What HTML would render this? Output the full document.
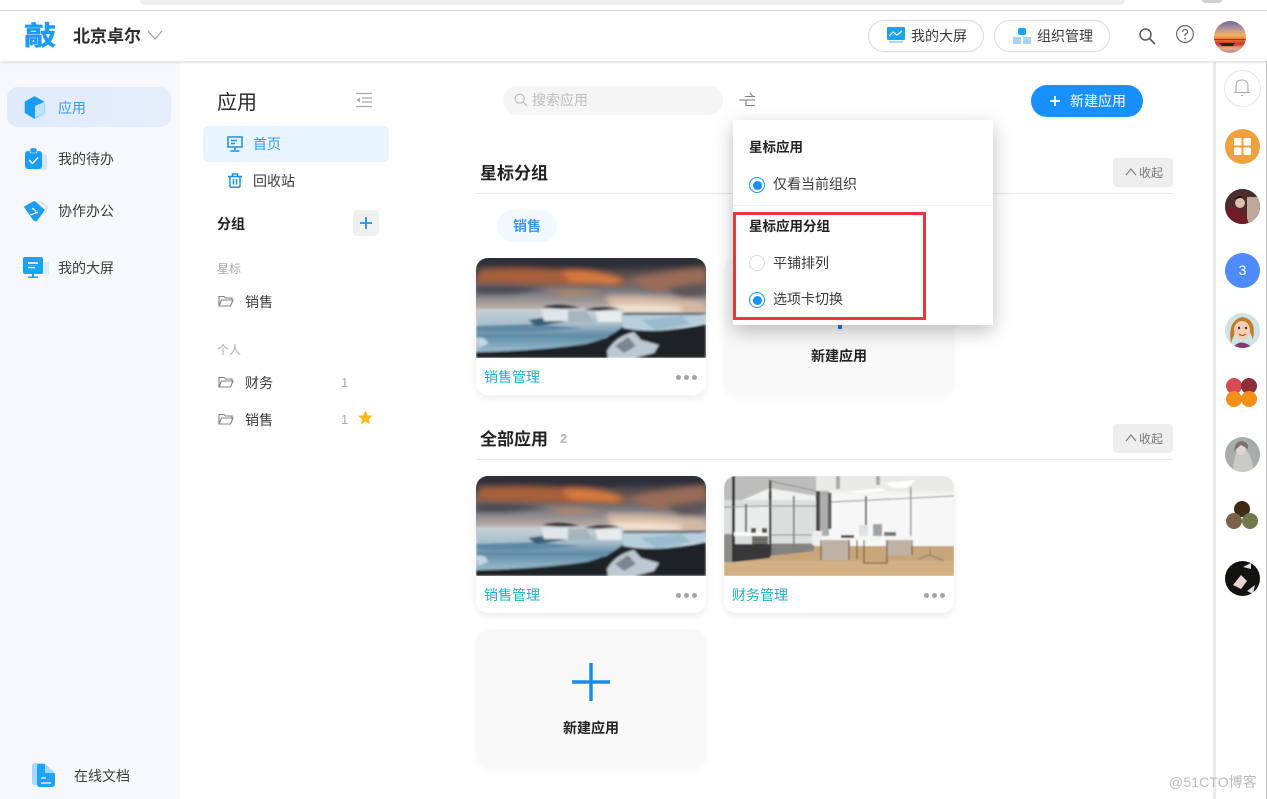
<!DOCTYPE html>
<html lang="zh"><head><meta charset="utf-8"><title>应用</title>
<style>
html,body{margin:0;padding:0;width:1267px;height:799px;overflow:hidden;background:#fff}
body{position:relative;font-family:"Liberation Sans","Noto Sans CJK SC",sans-serif;color:#333;font-size:14px}
.a{position:absolute}
.t{position:absolute;white-space:nowrap;line-height:20px;font-size:14px;color:#3a3a3a}
.b{font-weight:700;color:#222}
.card{position:absolute;width:230px;height:137px;border-radius:12px;background:#fff;box-shadow:0 3px 8px rgba(0,0,0,.08);overflow:hidden}
.card svg{display:block}
.nc{position:absolute;width:230px;background:#f8f8f8;border-radius:14px;box-shadow:0 3px 8px rgba(0,0,0,.04)}
.dots{position:absolute;width:22px;height:5px}
.dots i{position:absolute;top:0;width:5px;height:5px;border-radius:50%;background:#a4a4a4}
.dots i:nth-child(1){left:0}.dots i:nth-child(2){left:8px}.dots i:nth-child(3){left:16px}
.pill{position:absolute;top:20px;width:114px;height:30px;border:1px solid #d9d9d9;border-radius:16px;background:#fff}
.radio{position:absolute;left:749px;width:14px;height:14px;border:1px solid #1890ff;border-radius:50%;background:#fff}
.radio::after{content:"";position:absolute;left:2.5px;top:2.5px;width:9px;height:9px;border-radius:50%;background:#1890ff}
.radio.off{border-color:#d9d9d9}.radio.off::after{display:none}
.fold{position:absolute;left:1113px;width:60px;height:29px;background:#eee;border-radius:4px}
.av{position:absolute;left:1225px;width:35px;height:35px;border-radius:50%;overflow:hidden}
</style></head><body>
<svg width="0" height="0" style="position:absolute"><defs>
<linearGradient id="sky" x1="0" y1="0" x2="0" y2="1"><stop offset="0" stop-color="#2f313d"/><stop offset=".3" stop-color="#5f5150"/><stop offset=".55" stop-color="#7a7a80"/><stop offset=".8" stop-color="#b6aca6"/><stop offset="1" stop-color="#e3d8cc"/></linearGradient>
<linearGradient id="sea" x1="0" y1="0" x2="0" y2="1"><stop offset="0" stop-color="#c8d1d7"/><stop offset=".35" stop-color="#a9bfcd"/><stop offset=".62" stop-color="#5f8aa5"/><stop offset="1" stop-color="#9dbdcf"/></linearGradient>
<filter id="bl" x="-20%" y="-40%" width="140%" height="180%"><feGaussianBlur stdDeviation="3"/></filter>
<filter id="bs" x="-5%" y="-5%" width="110%" height="110%"><feGaussianBlur stdDeviation="1"/></filter>
<filter id="bm" x="-5%" y="-5%" width="110%" height="110%"><feGaussianBlur stdDeviation=".7"/></filter>
<symbol id="ice" viewBox="0 0 230 100">
<rect width="230" height="62" fill="url(#sky)"/>
<g filter="url(#bl)">
<path d="M0 0H230V9Q150 8 130 11T0 7Z" fill="#2b2d38"/>
<path d="M5 12Q50 9 90 13L148 20L150 27Q80 27 0 24Z" fill="#a8613a"/>
<path d="M85 13Q115 10 145 20L140 26L95 24Z" fill="#d9793c"/>
<path d="M150 22Q190 12 230 10V30L180 34Z" fill="#9a6c58"/>
<path d="M0 28Q40 26 70 31L30 36H0Z" fill="#45474f"/>
<path d="M190 30L230 24V38L205 40Z" fill="#5c5558"/>
<path d="M70 33Q100 30 130 36L90 38Z" fill="#b98a70"/>
<path d="M130 38Q170 36 230 44V54H135Z" fill="#d4b8a4"/>
<path d="M135 47Q170 45 205 49V55H140Z" fill="#f4e4d2"/>
</g>
<g filter="url(#bs)">
<path d="M147 55H230V56L215 58H147Z" fill="#4a4d55"/>
<path d="M0 94Q70 92 130 80L147 68L175 72Q205 72 230 66V100H0Z" fill="#1f2027"/>
<path d="M145 57H230V66L205 70Q185 74 160 72L147 70Z" fill="#b7cfdc"/>
<path d="M165 62L205 58L215 66L180 72Z" fill="#9abace"/>
<path d="M0 51H147L147 68Q135 80 110 86Q60 93 0 94Z" fill="url(#sea)"/>
<path d="M0 73Q50 76 105 70L60 66L0 68Z" fill="#5f8aa5"/>
<path d="M52 62L65 60L90 64L60 68Z" fill="#3d5d74"/>
<path d="M65 51H92L92 63H68Z" fill="#dfe5e8"/><path d="M92 53H110L118 64H92Z" fill="#a6b4bd"/>
<path d="M119 53H145L146 64H122Z" fill="#e7ebec"/>
<path d="M66 49Q84 44 104 50L85 51Z" fill="#34353b"/><path d="M108 52Q124 47 144 51L122 53Z" fill="#34353b"/>
<path d="M131 93Q140 78 158 74L165 82L183 87L178 95L158 100H132Z" fill="#bcc9d2"/>
<path d="M139 88L152 79L160 88L148 95Z" fill="#7b8690"/>
<path d="M0 80Q10 78 12 86L2 90Z" fill="#c5d7e1"/>
</g>
</symbol>
<symbol id="office" viewBox="0 0 230 100">
<rect width="230" height="100" fill="#f1f1f0"/>
<g filter="url(#bm)">
<rect width="230" height="15" fill="#e9e9e7"/>
<path d="M0 0H92V20L46 12L9 28H0Z" fill="#bdbdbd"/>
<rect y="24" width="92" height="50" fill="#dcdddd"/><rect x="10" y="30" width="36" height="28" fill="#eaebeb"/>
<rect x="105" y="18" width="125" height="52" fill="#f7f7f7"/>
<rect y="70" width="230" height="30" fill="#c9a67a"/>
<path d="M0 85H230V100H0Z" fill="#d2b083"/>
<path d="M0 58H10V86H0Z" fill="#8b8b88"/>
<path d="M10 68H46V82L10 86Z" fill="#38383a"/><path d="M46 68H90V75L46 80Z" fill="#828280"/>
<rect x="92" y="15" width="4" height="46" fill="#474747"/><rect x="96" y="15" width="9" height="47" fill="#aeaeae"/><rect x="104" y="17" width="3.5" height="36" fill="#5a5a5a"/>
<rect x="8" y="0" width="3" height="86" fill="#333"/><rect x="45" y="4" width="2.4" height="76" fill="#3e3e3e"/><rect x="21" y="28" width="2" height="30" fill="#666"/><rect x="69" y="20" width="1.6" height="52" fill="#777"/>
<rect x="141" y="20" width="1.8" height="40" fill="#555"/><rect x="186" y="11" width="1.4" height="52" fill="#888"/>
<path d="M46 5L92 15M0 31L46 30M46 30H92M10 57H46M47 59H92M47 68H92M107 26L230 20" stroke="#888" stroke-width=".9" fill="none"/>
<rect x="10" y="56" width="34" height="4" fill="#fbfbfb"/><rect x="27" y="52" width="5" height="5" fill="#555"/><rect x="38" y="52" width="5" height="5" fill="#555"/><rect x="28" y="60" width="16" height="8" fill="#6d6d6b"/>
<rect x="88" y="55" width="10" height="14" fill="#eee"/>
<rect x="97" y="60" width="93" height="4" fill="#f6f6f4"/>
<rect x="98" y="64" width="28" height="20" fill="#bdb2a4"/><rect x="162" y="64" width="25" height="15" fill="#bdb2a4"/>
<path d="M97 64V84M125 64V84M140 64V87H163V64M133 64V83M188 64V79" stroke="#6a5c48" stroke-width="1.2" fill="none"/>
<rect x="135" y="49" width="9" height="11" fill="#dfe1e2"/><rect x="149" y="48" width="9" height="12" fill="#9fa1a3"/><rect x="117" y="59" width="13" height="3" fill="#555"/><rect x="160" y="56" width="12" height="4" fill="#777"/>
<path d="M197 70H215L218 58H212L210 66H199Z" fill="#f7f7f7"/><path d="M206 72V80M194 83L206 79L220 85" stroke="#777" fill="none"/>
<rect x="112" y="0" width="4" height="13" fill="#aaa"/><rect x="152" y="0" width="4" height="9" fill="#aaa"/>
<path d="M126 15L158 12L162 15L132 17Z" fill="#fff"/><path d="M160 7L192 4L182 12L170 12Z" fill="#fff"/>
</g>
</symbol>
</defs></svg>

<!-- browser strip -->
<div class="a" style="left:140px;top:0;width:985px;height:5px;background:#efefef;border-radius:0 0 10px 10px"></div>
<div class="a" style="left:1202px;top:0;width:20px;height:3px;background:#cfcfcf;border-radius:0 0 10px 10px"></div>
<div class="a" style="left:0;top:10px;width:1267px;height:1px;background:#ddd"></div>

<!-- sidebars -->
<div class="a" style="left:0;top:62px;width:180px;height:737px;background:#f6f8fc"></div>
<div class="a" style="left:1213px;top:62px;width:3px;height:737px;background:#ececec"></div>
<div class="a" style="left:1266px;top:11px;width:1px;height:788px;background:#c4c4c4"></div>

<!-- header -->
<div class="a" style="left:0;top:11px;width:1267px;height:50px;background:#fff;box-shadow:0 1px 3px rgba(0,0,0,.16)"></div>
<div class="t" style="left:24px;top:20px;font-size:32px;line-height:32px;font-weight:700;color:#1a9cf0;transform:scaleY(.84);-webkit-text-stroke:.7px #1a9cf0">敲</div>
<div class="t b" style="left:73px;top:27px;font-size:17px;color:#2c2c2c">北京卓尔</div>
<svg class="a" style="left:147px;top:30px" width="16" height="11"><path d="M1 1L8 9L15 1" fill="none" stroke="#999" stroke-width="1.2"/></svg>
<div class="pill" style="left:868px"></div>
<svg class="a" style="left:887px;top:27px" width="18" height="17"><rect width="18" height="13" rx="1" fill="#1aa3f5"/><rect x="2" y="14" width="14" height="2" fill="#a9dcfb"/><path d="M2 9L6 5L10 8L15 4" stroke="#fff" fill="none" stroke-width="1.2"/></svg>
<div class="t" style="left:911px;top:26px;font-size:14px;line-height:20px">我的大屏</div>
<div class="pill" style="left:994px"></div>
<svg class="a" style="left:1013px;top:28px" width="18" height="16"><rect x="5" y="0" width="8" height="7" rx="2" fill="#1aa3f5"/><rect x="0" y="9" width="8" height="7" fill="#a8d4f5"/><rect x="10" y="9" width="8" height="7" fill="#a8d4f5"/></svg>
<div class="t" style="left:1037px;top:26px">组织管理</div>
<svg class="a" style="left:1138px;top:27px" width="18" height="18"><circle cx="7.5" cy="7.5" r="5.5" fill="none" stroke="#555" stroke-width="1.4"/><path d="M11.5 11.5L17 17" stroke="#555" stroke-width="1.6"/></svg>
<svg class="a" style="left:1175px;top:24px" width="20" height="20"><circle cx="10" cy="10" r="8.4" fill="none" stroke="#666" stroke-width="1.2"/><path d="M7.5 8Q7.5 5.5 10 5.5T12.5 8Q12.5 9.3 10 10.5V12" fill="none" stroke="#666" stroke-width="1.2"/><circle cx="10" cy="14.5" r=".9" fill="#666"/></svg>
<svg class="a" style="left:1214px;top:21px" width="32" height="32"><defs><clipPath id="c0"><circle cx="16" cy="16" r="16"/></clipPath><linearGradient id="sun" x1="0" y1="0" x2="0" y2="1"><stop offset="0" stop-color="#6a6a9e"/><stop offset=".3" stop-color="#c79a92"/><stop offset=".45" stop-color="#f5b35a"/><stop offset=".6" stop-color="#e8662d"/><stop offset=".72" stop-color="#c8382a"/><stop offset=".85" stop-color="#e7a98c"/><stop offset="1" stop-color="#b98a8a"/></linearGradient></defs><g clip-path="url(#c0)"><rect width="32" height="32" fill="url(#sun)"/><path d="M5 22H21L19 25H8Z" fill="#222"/><path d="M0 18H32V19H0Z" fill="#a53222"/></g></svg>

<!-- left nav -->
<div class="a" style="left:7px;top:87px;width:164px;height:40px;border-radius:11px;background:linear-gradient(90deg,#dfeafa,#e6eefb)"></div>
<svg class="a" style="left:23px;top:95px" width="24" height="25"><path d="M13 5L23 10V21L13 24Z" fill="#cfe6fb"/><path d="M11.5 2L20.5 7V17.5L11.5 23L2.5 17.5V7Z" fill="#189cf6" stroke="#189cf6" stroke-width="1.5" stroke-linejoin="round"/><path d="M12 11L21 7V18L12 23Z" fill="#bfe1fc"/></svg>
<div class="t" style="left:58px;top:98px;color:#3d97e8">应用</div>
<svg class="a" style="left:25px;top:148px" width="22" height="22"><rect x="8" y="6" width="14" height="16" rx="2" fill="#cfe6fb"/><rect x="0" y="3" width="17" height="18" rx="3" fill="#1c9cf2"/><rect x="5" y="0" width="7" height="5" rx="1.5" fill="#1c9cf2" stroke="#f6f8fc" stroke-width=".6"/><path d="M4 12L7.5 15.5L13 9.5" fill="none" stroke="#fff" stroke-width="1.4"/></svg>
<div class="t" style="left:58px;top:149px">我的待办</div>
<svg class="a" style="left:23px;top:200px" width="25" height="22"><path d="M9 3L18 2L24 7L22 13" fill="none" stroke="#cfe3f8" stroke-width="1.6"/><path d="M1 7Q1 6 2 6L11 1Q12 1 13 2L22 10L14 21Q12 22 10 20Z" fill="#1c9cf2"/><path d="M9 8L13 11M7.5 15L15 12" stroke="#fff" stroke-width="1.3"/></svg>
<div class="t" style="left:58px;top:201px">协作办公</div>
<svg class="a" style="left:23px;top:257px" width="26" height="21"><rect x="17" y="5" width="9" height="12" fill="#d7ebfb"/><rect width="20" height="17" rx="2" fill="#16a3f5"/><path d="M5 6H15M5 10.5H12" stroke="#fff" stroke-width="1.4"/><rect x="9" y="17" width="2" height="3" fill="#16a3f5"/><rect x="5" y="19.5" width="10" height="1.5" fill="#16a3f5"/></svg>
<div class="t" style="left:58px;top:258px">我的大屏</div>
<svg class="a" style="left:32px;top:763px" width="24" height="25"><path d="M3 0H11L10 22H3Q0 22 0 19V3Q0 0 3 0Z" fill="#a8d7fb"/><path d="M7 1H13L23 11V21Q23 24 20 24H8Q5 24 5 21V3Q5 1 7 1Z" fill="#1ea3f7"/><path d="M9 15H14M9 20H19" stroke="#d6eefe" stroke-width="1.4"/><path d="M13 1V10H23Z" fill="#9fd5fb"/></svg>
<div class="t" style="left:74px;top:766px">在线文档</div>

<!-- second nav -->
<div class="t" style="left:217px;top:90px;font-size:20px;line-height:26px;color:#2b2b2b">应用</div>
<svg class="a" style="left:355px;top:92px" width="18" height="16" stroke="#a8a8a8"><path d="M1 1.5H17M7 6H17M7 10H17M1 14.5H17" stroke-width="1.2"/><path d="M5 5.5V10.5L1.5 8Z" fill="#a8a8a8" stroke="none"/></svg>
<div class="a" style="left:203px;top:126px;width:186px;height:36px;border-radius:5px;background:#e8f4fe"></div>
<svg class="a" style="left:227px;top:136px" width="16" height="16" fill="none" stroke="#1c92e6" stroke-width="1.5"><rect x="1" y="1" width="14" height="10"/><path d="M4 4.5H10M4 7.5H8M8 11V14M3.5 15H12.5"/></svg>
<div class="t" style="left:253px;top:134px;color:#3d97e8">首页</div>
<svg class="a" style="left:228px;top:173px" width="14" height="15" fill="none" stroke="#1c92e6" stroke-width="1.5"><path d="M0 3.5H14M4.5 3V1H9.5V3M2 4V13Q2 14.3 3.5 14.3H10.5Q12 14.3 12 13V4M5.5 6V11.5M8.5 6V11.5"/></svg>
<div class="t" style="left:253px;top:171px">回收站</div>
<div class="t b" style="left:217px;top:214px">分组</div>
<div class="a" style="left:353px;top:210px;width:26px;height:26px;border-radius:4px;background:#eef0f2"></div>
<svg class="a" style="left:359px;top:216px" width="14" height="14"><path d="M7 1V13M1 7H13" stroke="#1c92e6" stroke-width="1.8"/></svg>
<div class="t" style="left:217px;top:259px;font-size:12px;color:#aaa">星标</div>
<svg class="a" style="left:218px;top:295px" width="16" height="12" fill="none" stroke="#808080" stroke-width="1.1"><path d="M1 11V1.5H6L7.5 3H14V5M1 11H12.5L15 5H3.5L1 11Z"/></svg>
<div class="t" style="left:245px;top:292px">销售</div>
<div class="t" style="left:217px;top:340px;font-size:12px;color:#aaa">个人</div>
<svg class="a" style="left:218px;top:376px" width="16" height="12" fill="none" stroke="#808080" stroke-width="1.1"><path d="M1 11V1.5H6L7.5 3H14V5M1 11H12.5L15 5H3.5L1 11Z"/></svg>
<div class="t" style="left:245px;top:373px">财务</div>
<div class="t" style="left:341px;top:373px;color:#aaa;font-size:13px">1</div>
<svg class="a" style="left:218px;top:413px" width="16" height="12" fill="none" stroke="#808080" stroke-width="1.1"><path d="M1 11V1.5H6L7.5 3H14V5M1 11H12.5L15 5H3.5L1 11Z"/></svg>
<div class="t" style="left:245px;top:410px">销售</div>
<div class="t" style="left:341px;top:410px;color:#aaa;font-size:13px">1</div>
<svg class="a" style="left:358px;top:410px" width="15" height="15"><path d="M7.5 .5L9.6 5.2L14.7 5.7L10.8 9.1L12 14.2L7.5 11.5L3 14.2L4.2 9.1L.3 5.7L5.4 5.2Z" fill="#fdb913"/></svg>

<!-- toolbar -->
<div class="a" style="left:503px;top:86px;width:220px;height:29px;border-radius:15px;background:#f5f5f5"></div>
<svg class="a" style="left:514px;top:93px" width="14" height="14"><circle cx="5.7" cy="5.7" r="4.5" fill="none" stroke="#bbb" stroke-width="1.1"/><path d="M9 9L13 13" stroke="#bbb" stroke-width="1.2"/></svg>
<div class="t" style="left:532px;top:90px;color:#bdbdbd">搜索应用</div>
<svg class="a" style="left:738px;top:92px" width="18" height="15" fill="none" stroke="#7f7f7f" stroke-width="1.1"><path d="M7 4.5H17M12 1L15 4.5M1 8H17M8 8V13.5H17"/></svg>
<div class="a" style="left:1031px;top:85px;width:112px;height:32px;border-radius:16px;background:#1890ff"></div>
<svg class="a" style="left:1049px;top:95px" width="12" height="12"><path d="M6 1V11M1 6H11" stroke="#fff" stroke-width="1.8"/></svg>
<div class="t" style="left:1070px;top:91px;color:#fff">新建应用</div>

<!-- star section -->
<div class="t b" style="left:480px;top:164px;font-size:17px">星标分组</div>
<div class="a" style="left:476px;top:193px;width:697px;height:1px;background:#e8e8e8"></div>
<div class="fold" style="top:158px"></div>
<svg class="a" style="left:1125px;top:168px" width="12" height="8"><path d="M1 7L6 1L11 7" fill="none" stroke="#777" stroke-width="1.1"/></svg>
<div class="t" style="left:1139px;top:163px;font-size:12px;color:#777">收起</div>
<div class="a" style="left:497px;top:210px;width:60px;height:32px;border-radius:16px;background:#f1f8fe"></div>
<div class="t" style="left:513px;top:216px;color:#3d97e8;font-weight:700">销售</div>

<div class="card" style="left:476px;top:258px"><svg width="230" height="100"><use href="#ice"/></svg></div>
<div class="t" style="left:484px;top:367px;color:#19b1c9">销售管理</div>
<div class="dots" style="left:676px;top:374.5px"><i></i><i></i><i></i></div>
<div class="nc" style="left:724px;top:258px;height:137px"></div>
<div class="t b" style="left:811px;top:346px">新建应用</div>

<!-- all section -->
<div class="t b" style="left:480px;top:430px;font-size:17px">全部应用</div>
<div class="t" style="left:560px;top:429px;color:#b5b5b5;font-weight:700;font-size:13px">2</div>
<div class="a" style="left:476px;top:459px;width:697px;height:1px;background:#e8e8e8"></div>
<div class="fold" style="top:424px"></div>
<svg class="a" style="left:1125px;top:434px" width="12" height="8"><path d="M1 7L6 1L11 7" fill="none" stroke="#777" stroke-width="1.1"/></svg>
<div class="t" style="left:1139px;top:429px;font-size:12px;color:#777">收起</div>

<div class="card" style="left:476px;top:476px"><svg width="230" height="100"><use href="#ice"/></svg></div>
<div class="t" style="left:484px;top:585px;color:#19b1c9">销售管理</div>
<div class="dots" style="left:676px;top:592.5px"><i></i><i></i><i></i></div>
<div class="card" style="left:724px;top:476px"><svg width="230" height="100"><use href="#office"/></svg></div>
<div class="t" style="left:732px;top:585px;color:#19b1c9">财务管理</div>
<div class="dots" style="left:924px;top:592.5px"><i></i><i></i><i></i></div>
<div class="nc" style="left:476px;top:629px;height:138px"></div>
<svg class="a" style="left:572px;top:662px" width="38" height="40"><path d="M19 1V39M0 20H38" stroke="#0f8df2" stroke-width="3.4"/></svg>
<div class="t b" style="left:563px;top:718px">新建应用</div>

<!-- popup -->
<div class="a" style="left:733px;top:120px;width:260px;height:205px;background:#fff;box-shadow:0 6px 18px rgba(0,0,0,.25)"></div>
<svg class="a" style="left:838px;top:325px" width="4" height="4"><rect width="4" height="4" fill="#1565c0"/></svg>
<div class="t b" style="left:749px;top:138px;font-size:13.5px">星标应用</div>
<div class="radio" style="top:177px"></div>
<div class="t" style="left:773px;top:174px">仅看当前组织</div>
<div class="a" style="left:733px;top:205px;width:260px;height:1px;background:#eee"></div>
<div class="t b" style="left:749px;top:217px;font-size:13.5px">星标应用分组</div>
<div class="radio off" style="top:255px"></div>
<div class="t" style="left:773px;top:253px">平铺排列</div>
<div class="radio" style="top:292px"></div>
<div class="t" style="left:773px;top:289px">选项卡切换</div>
<div class="a" style="left:733px;top:212px;width:187px;height:102px;border:3px solid #e8383d"></div>

<!-- right rail -->
<div class="a" style="left:1224px;top:70px;width:35px;height:35px;border:1px solid #e6e6e6;border-radius:50%"></div>
<svg class="a" style="left:1233px;top:78px" width="18" height="19" fill="none" stroke="#aaa" stroke-width="1.1"><path d="M3 14V8Q3 2 9 2T15 8V14M1 14.5H17M8 17.5H10"/></svg>
<div class="a" style="left:1225px;top:129px;width:35px;height:35px;border-radius:50%;background:#eda23e"></div>
<svg class="a" style="left:1234px;top:138px" width="17" height="17"><rect width="7.5" height="7.5" rx="1" fill="#fff"/><rect x="9.5" width="7.5" height="7.5" rx="1" fill="#fff"/><rect y="9.5" width="7.5" height="7.5" rx="1" fill="#fff"/><rect x="9.5" y="9.5" width="7.5" height="7.5" rx="1" fill="#fff"/></svg>
<div class="av" style="top:189px;background:#4a2a2a"><svg width="35" height="35"><rect width="35" height="35" fill="#4a2d2c"/><rect x="22" y="8" width="13" height="27" fill="#bda899"/><path d="M0 35V22Q10 14 20 24L24 35Z" fill="#6e1d26"/><circle cx="15" cy="14" r="5" fill="#e0bfae"/><path d="M8 12Q15 2 22 12L18 8L10 10Z" fill="#1d1412"/></svg></div>
<div class="av" style="top:253px;background:#4f8bfb;color:#fff;text-align:center;line-height:35px;font-size:14px">3</div>
<div class="av" style="top:313px"><svg width="35" height="35"><rect width="35" height="35" fill="#cfe2e4"/><path d="M6 30Q2 8 17 4Q32 6 28 26L22 12L12 14Z" fill="#c47a2c"/><ellipse cx="17" cy="17" rx="8" ry="9" fill="#f5cdb2"/><path d="M8 35Q15 24 28 35Z" fill="#7d3a70"/><circle cx="14" cy="15" r="1.2" fill="#333"/><circle cx="21" cy="15" r="1.2" fill="#333"/><path d="M14 21Q17 24 21 21" stroke="#c33" fill="none"/></svg></div>
<svg class="a" style="left:1226px;top:378px" width="32" height="30"><circle cx="8" cy="8" r="8" fill="#d44a55"/><circle cx="23" cy="8" r="8" fill="#8c2f38"/><circle cx="8" cy="21" r="8" fill="#f29018"/><circle cx="23" cy="21" r="8" fill="#f29018"/></svg>
<div class="av" style="top:437px"><svg width="35" height="35"><rect width="35" height="35" fill="#a9acad"/><path d="M8 35Q8 16 17 10Q28 16 28 35Z" fill="#c9c9c6"/><circle cx="16" cy="13" r="5" fill="#e2d7d0"/><path d="M9 14Q10 4 17 4Q24 5 23 12L16 8Z" fill="#7a7370"/></svg></div>
<svg class="a" style="left:1226px;top:501px" width="32" height="30"><circle cx="16" cy="8" r="8" fill="#3e2a14"/><circle cx="8" cy="20" r="8" fill="#7a6248"/><circle cx="24" cy="20" r="8" fill="#6e7a4e"/></svg>
<div class="av" style="top:561px"><svg width="35" height="35"><rect width="35" height="35" fill="#12120f"/><path d="M8 24L16 14L22 20L16 28Z" fill="#e7d6cf"/><path d="M18 6L26 2L26 8Z" fill="#e8e2e0"/><path d="M22 30L30 24L28 33Z" fill="#ddd"/></svg></div>

<div class="t" style="left:1169px;top:772px;font-size:14px;color:#bcbcbc;letter-spacing:.1px">@51CTO博客</div>
</body></html>
